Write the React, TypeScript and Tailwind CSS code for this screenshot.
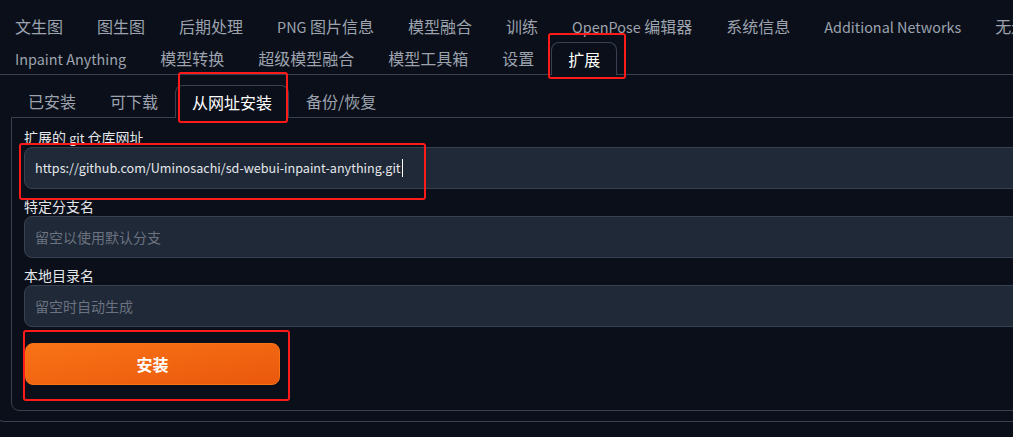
import React from 'react';

// Top navigation tabs (two wrapped rows)
const topRow = ['文生图', '图生图', '后期处理', 'PNG 图片信息', '模型融合', '训练', 'OpenPose 编辑器', '系统信息', 'Additional Networks', '无边图像浏览'];
const secondRow = ['Inpaint Anything', '模型转换', '超级模型融合', '模型工具箱', '设置', '扩展'];
const subTabs = ['已安装', '可下载', '从网址安装', '备份/恢复'];

// latin runs render a bit narrower in the original font, shrink them slightly
const mix = (text: string, latin: string) =>
  text.split(/([A-Za-z0-9.:\/_-]+(?: [A-Za-z0-9.:\/_-]+)*)/).map((part, i) =>
    /[A-Za-z]/.test(part) ? (
      <span key={i} className={latin}>
        {part}
      </span>
    ) : (
      part
    )
  );

const Tab = ({ label, active }: { label: string; active?: boolean }) => (
  <button
    className={
      active
        ? 'relative -mb-px h-[33px] shrink-0 rounded-t-[8px] border border-b-0 border-[#374151] bg-[#0b0f19] px-[16px] text-white'
        : 'h-[32px] shrink-0 border border-transparent px-[16px] text-[#9ca3af]'
    }
  >
    {mix(label, 'text-[14.4px]')}
  </button>
);

const Field = ({ label, value, placeholder }: { label: string; value?: string; placeholder?: string }) => (
  <div className="flex flex-col">
    <span className="h-[20px] text-[14px] leading-[20px] text-[#e5e7eb]">{mix(label, 'text-[12.6px]')}</span>
    <div className="flex h-[42px] items-center rounded-[8px] border border-[#374151] bg-[#1f2937] px-[10px] text-[14px]">
      {value ? (
        <span className="border-r border-white pr-px text-[12.6px] text-[#e5e7eb]">{value}</span>
      ) : (
        <span className="text-[#6b7280]">{placeholder}</span>
      )}
    </div>
  </div>
);

const RedBox = ({ className }: { className: string }) => (
  <div className={'pointer-events-none absolute rounded-[3px] border-2 border-[#ff1a1a] ' + className} />
);

export default function App() {
  return (
    <div className="relative h-[437px] w-[1013px] overflow-hidden bg-[#0b0f19] font-['Noto_Sans_CJK_SC','Noto_Sans',sans-serif] text-[16px]">
      {/* main tab nav */}
      <div className="ml-[-2px] pt-[10px]">
        <div className="flex whitespace-nowrap">
          {topRow.map((t) => (
            <Tab key={t} label={t} />
          ))}
        </div>
        <div className="flex w-[1100px] items-end whitespace-nowrap border-b border-[#374151]">
          {secondRow.map((t) => (
            <Tab key={t} label={t} active={t === '扩展'} />
          ))}
        </div>
      </div>

      {/* outer tab panel */}
      <div className="ml-[-4px] w-[1100px] rounded-b-[8px] border-x border-b border-[#374151] pb-[10px] pl-[14px] pt-[10px]">
        <div className="flex items-end whitespace-nowrap">
          {subTabs.map((t) => (
            <Tab key={t} label={t} active={t === '从网址安装'} />
          ))}
        </div>
        <div className="flex flex-col gap-[7px] rounded-b-[8px] border border-[#374151] pb-[25px] pl-[12px] pt-[9px]">
          <Field label="扩展的 git 仓库网址" value="https://github.com/Uminosachi/sd-webui-inpaint-anything.git" />
          <Field label="特定分支名" placeholder="留空以使用默认分支" />
          <Field label="本地目录名" placeholder="留空时自动生成" />
          <button className="ml-px mt-[9px] h-[42px] w-[255px] rounded-[8px] border border-[#f97316] bg-gradient-to-br from-[#f97316] to-[#ea580c] text-[16px] font-bold text-white">
            安装
          </button>
        </div>
      </div>

      {/* red annotation boxes */}
      <RedBox className="left-[548px] top-[33px] h-[46px] w-[78px]" />
      <RedBox className="left-[178px] top-[72px] h-[51px] w-[110px]" />
      <RedBox className="left-[19px] top-[143px] h-[57px] w-[407px]" />
      <RedBox className="left-[23px] top-[330px] h-[71px] w-[267px]" />
    </div>
  );
}
